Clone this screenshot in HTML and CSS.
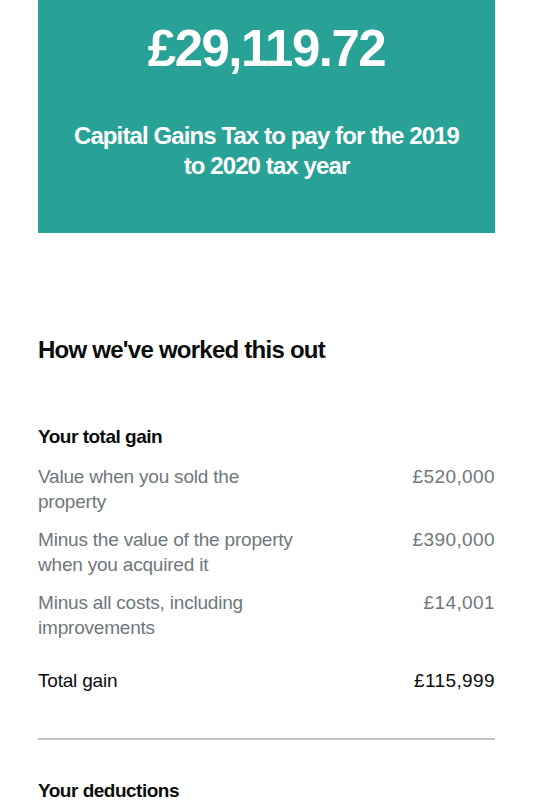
FILE: index.html
```html
<!DOCTYPE html>
<html lang="en">
<head>
<meta charset="utf-8">
<title>Capital Gains Tax</title>
<link rel="stylesheet" href="styles.css">
</head>
<body>
<main class="page">
  <div class="panel">
    <h1 class="panel-amount">£29,119.72</h1>
    <p class="panel-body">Capital Gains Tax to pay for the 2019 to 2020 tax year</p>
  </div>

  <h2 class="heading-m">How we've worked this out</h2>

  <section class="calc">
    <h3 class="heading-s">Your total gain</h3>
    <dl class="rows">
      <div class="row muted">
        <dt>Value when you sold the property</dt>
        <dd>£520,000</dd>
      </div>
      <div class="row muted">
        <dt>Minus the value of the property when you acquired it</dt>
        <dd>£390,000</dd>
      </div>
      <div class="row muted">
        <dt>Minus all costs, including improvements</dt>
        <dd>£14,001</dd>
      </div>
      <div class="row total">
        <dt>Total gain</dt>
        <dd>£115,999</dd>
      </div>
    </dl>
    <hr class="rule">
    <h3 class="heading-s">Your deductions</h3>
  </section>
</main>
</body>
</html>
```

FILE: styles.css
```css
html, body {
  margin: 0;
  padding: 0;
  background: #ffffff;
}
body {
  font-family: "Liberation Sans", Arial, sans-serif;
  color: #0b0c0c;
  -webkit-font-smoothing: antialiased;
}
.page {
  margin: 0 45px 0 38px;
}
.panel {
  background: #28a197;
  color: #ffffff;
  text-align: center;
  height: 233px;
  box-sizing: border-box;
  padding: 19px 30px 0;
}
.panel-amount {
  margin: 0;
  font-size: 51px;
  line-height: 60px;
  font-weight: 700;
  letter-spacing: -1.5px;
}
.panel-body {
  margin: 42px 0 0;
  font-size: 24px;
  line-height: 30px;
  font-weight: 700;
  letter-spacing: -0.9px;
}
.heading-m {
  margin: 99px 0 0;
  font-size: 24px;
  line-height: 36px;
  font-weight: 700;
  letter-spacing: -0.75px;
}
.calc {
  margin-top: 56px;
}
.heading-s {
  margin: 0;
  font-size: 19px;
  line-height: 25px;
  font-weight: 700;
  letter-spacing: -0.5px;
}
.rows {
  margin: 15px 0 0;
}
.row {
  display: flex;
  justify-content: space-between;
  gap: 20px;
  font-size: 19px;
  line-height: 25px;
  margin-bottom: 13px;
}
.row dt {
  width: 262px;
  letter-spacing: -0.2px;
}
.row dd {
  margin: 0;
  text-align: right;
  letter-spacing: 0.4px;
}
.muted {
  color: #6f777b;
}
.total {
  margin-top: 28px;
  color: #0b0c0c;
}
.total + .rule {
  margin-top: 45px;
}
.rule {
  margin: 45px 0 38px;
  border: 0;
  border-top: 2px solid #bfc1c3;
  height: 0;
}
```
